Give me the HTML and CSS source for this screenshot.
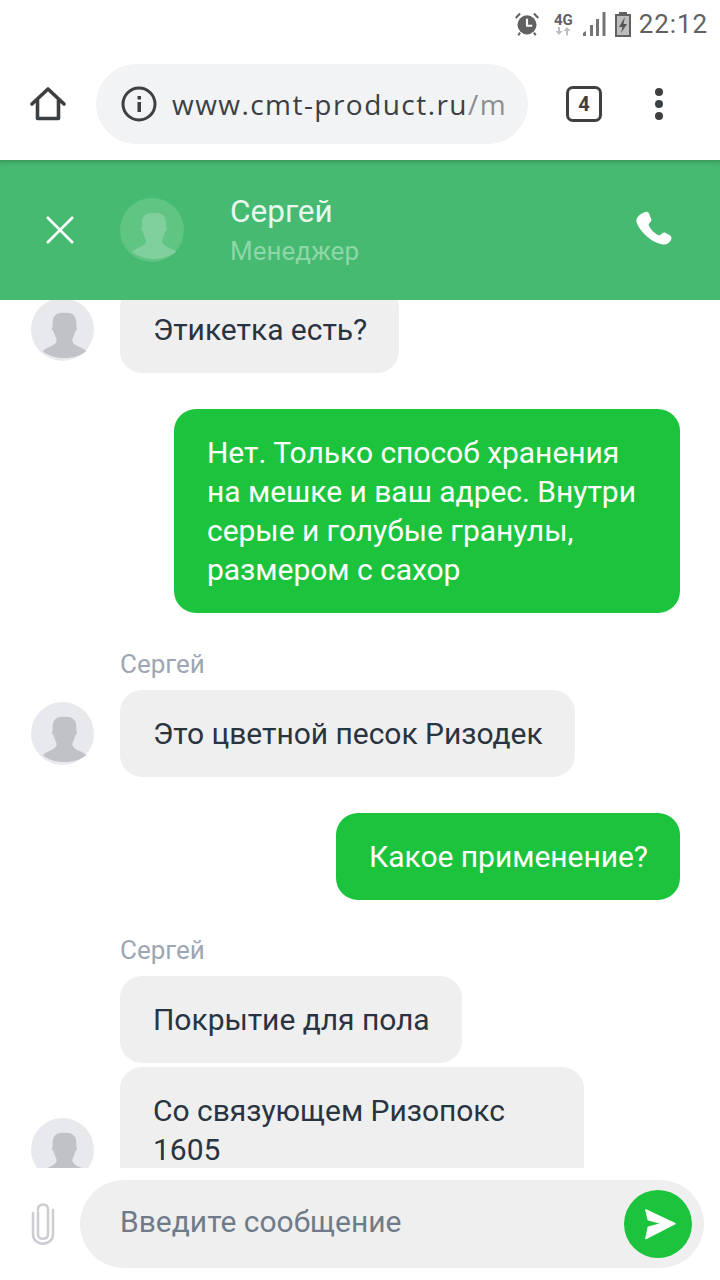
FILE: index.html
```html
<!DOCTYPE html>
<html lang="ru">
<head>
  <meta charset="UTF-8" />
  <meta name="viewport" content="width=device-width, initial-scale=1.0"/>
  <title>Чат</title>
  <link rel="stylesheet" href="styles.css">
</head>
<body>

<div class="status-bar">
  <svg class="st-alarm" width="26" height="26" viewBox="0 0 30 28">
    <circle cx="15" cy="15" r="11" fill="#616161"/>
    <path d="M15 8v8h6" fill="none" stroke="#fff" stroke-width="2.400"/>
    <path d="M2 7l5-5M28 7l-5-5M7 24l-2 3M23 24l2 3" stroke="#616161" stroke-width="2.400" fill="none"/>
  </svg>
  <div class="st-net">
    <span class="st-4g">4G</span>
    <svg width="16" height="9" viewBox="0 0 16 9">
      <path d="M4 8L0.500 4H3V0h2v4h2.500z" fill="#bdbdbd"/>
      <path d="M12 0l3.500 4H13v4.500h-2V4H8.500z" fill="#bdbdbd"/>
    </svg>
  </div>
  <svg class="st-signal" width="24" height="24" viewBox="0 0 24 24">
    <path d="M1 24v-3l3-2v5zM8 24V13h3v11zM14 24V7h3v17zM20.500 24V0h3v24z" fill="#757575"/>
  </svg>
  <svg class="st-batt" width="16" height="25" viewBox="0 0 16 25">
    <rect x="4" y="0" width="8" height="3" fill="#616161"/>
    <rect x="1" y="3" width="14" height="21" fill="#bdbdbd" stroke="#616161" stroke-width="2"/>
    <path d="M10 5L4 15h3.500L6 21l6-9H8.500z" fill="#555"/>
  </svg>
  <span class="st-time">22:12</span>
</div>

<div class="browser-bar">
  <svg class="home-icon" width="38" height="38" viewBox="0 0 38 38">
    <path d="M3 19L19 4l16 15M8.500 15v18.500h21V15" fill="none" stroke="#3c4043" stroke-width="3.600" stroke-linejoin="round" stroke-linecap="round"/>
  </svg>
  <div class="url-box">
    <svg class="info-icon" width="36" height="36" viewBox="0 0 36 36">
      <circle cx="18" cy="18" r="16" fill="none" stroke="#3c4043" stroke-width="3"/>
      <rect x="16.500" y="16" width="3.500" height="10" fill="#3c4043"/>
      <rect x="16.500" y="10" width="3.500" height="3.500" fill="#3c4043"/>
    </svg>
    <div class="url-text">www.cmt-product.ru<span class="url-path">/m</span></div>
  </div>
  <div class="tabs-count">4</div>
  <div class="menu-dots"><i></i><i></i><i></i></div>
</div>

<div class="chat-head">
  <svg class="close-icon" width="30" height="30" viewBox="0 0 30 30">
    <path d="M2 2l26 26M28 2L2 28" stroke="#fff" stroke-width="2.600" fill="none"/>
  </svg>
  <svg class="avatar avatar-head" viewBox="0 0 64 64">
    <circle cx="32" cy="32" r="32" fill="#60c583"/>
    <path d="M32 15c-7 0-10 4-10 10v4c-1 1-1 3 0 4 1 0 1 2 2 4 1 3 2 4 2 6 0 3-3 5-8 7-3 1-5 3-6 4 5 4 13 7 22 7s17-3 22-7c-1-1-3-3-6-4-5-2-8-4-8-7 0-2 1-3 2-6 1-2 1-4 2-4 1-1 1-3 0-4v-4c0-6-3-10-10-10z" fill="#7fd09c"/>
  </svg>
  <div class="head-info">
    <div class="head-name">Сергей</div>
    <div class="head-role">Менеджер</div>
  </div>
  <svg class="phone-icon" width="38" height="38" viewBox="0 0 38 38">
    <path d="M9 1.500c2-1 4-1 5 1l2 5c1 2 0 3-1.500 4.500-1 1-1 2-.5 3 2 4 5 7 9 9 1 .5 2 .5 3-.5 1.500-1.500 2.500-2.500 4.500-1.500l4 2c2 1 2.500 3 1.500 5-1.500 3-4.500 5-8 4.500C15 31.500 4 19 1.500 11 .500 7 5 3 9 1.500z" fill="#fff"/>
  </svg>
</div>

<div class="chat">
  <div class="msg-row first">
    <svg class="avatar" viewBox="0 0 64 64"><use href="#person"/></svg>
    <div class="bubble">Этикетка есть?</div>
  </div>

  <div class="own-row gap-a">
    <div class="bubble own wide">Нет. Только способ хранения на мешке и ваш адрес. Внутри серые и голубые гранулы, размером с сахор</div>
  </div>

  <div class="sender">Сергей</div>
  <div class="msg-row">
    <svg class="avatar" viewBox="0 0 64 64"><use href="#person"/></svg>
    <div class="bubble">Это цветной песок Ризодек</div>
  </div>

  <div class="own-row gap-b">
    <div class="bubble own">Какое применение?</div>
  </div>

  <div class="sender second">Сергей</div>
  <div class="msg-row plain">
    <div class="bubble">Покрытие для пола</div>
  </div>
  <div class="msg-row last">
    <svg class="avatar" viewBox="0 0 64 64"><use href="#person"/></svg>
    <div class="bubble narrow">Со связующем Ризопокс 1605</div>
  </div>
</div>

<div class="input-bar">
  <svg class="clip-icon" width="26" height="42" viewBox="0 0 26 42">
    <path d="M8 9v23c0 5 10 5 10 0V6.500C18 3 16 1.500 13 1.500S8 3 8 6.500M3 10v21c0 13 20 13 20 0V7" fill="none" stroke="#ccced3" stroke-width="2.600" stroke-linecap="round"/>
  </svg>
  <div class="input-box">
    <span class="placeholder">Введите сообщение</span>
    <div class="send-btn">
      <svg class="send-icon" width="32" height="32" viewBox="0 0 34 32">
        <path d="M2 1l31 14.500L2 31.500l2.500-12 15-4-15-4z" fill="#fff" stroke="#fff" stroke-width="1.500" stroke-linejoin="round"/>
      </svg>
    </div>
  </div>
</div>

<svg width="0" height="0" class="defs">
  <defs>
    <g id="person">
      <circle cx="32" cy="32" r="32" fill="#e8e9ec"/>
      <path d="M32 15c-7 0-10 4-10 10v4c-1 1-1 3 0 4 1 0 1 2 2 4 1 3 2 4 2 6 0 3-3 5-8 7-3 1-5 3-6 4 5 4 13 7 22 7s17-3 22-7c-1-1-3-3-6-4-5-2-8-4-8-7 0-2 1-3 2-6 1-2 1-4 2-4 1-1 1-3 0-4v-4c0-6-3-10-10-10z" fill="#c1c2c8"/>
    </g>
  </defs>
</svg>

</body>
</html>
```

FILE: styles.css
```css
html, body {
  margin: 0;
  padding: 0;
}
body {
  width: 720px;
  height: 1280px;
  overflow: hidden;
  background: #fff;
  font-family: Roboto, "Noto Sans", sans-serif;
  display: flex;
  flex-direction: column;
}

.status-bar {
  height: 48px;
  box-sizing: border-box;
  display: flex;
  align-items: center;
  justify-content: flex-end;
  padding: 0 12px 0 0;
  color: #616161;
}
.st-alarm {
  margin-right: 14px;
}
.st-net {
  display: flex;
  flex-direction: column;
  align-items: center;
  margin-right: 9px;
}
.st-4g {
  font-size: 15px;
  font-weight: 700;
  line-height: 14px;
}
.st-signal {
  margin-right: 9px;
}
.st-batt {
  margin-right: 8px;
}
.st-time {
  font-size: 26px;
  letter-spacing: 0.9px;
}

.browser-bar {
  height: 112px;
  box-sizing: border-box;
  display: flex;
  align-items: center;
  padding: 0 0 0 29px;
}
.url-box {
  margin-left: 29px;
  width: 432px;
  height: 80px;
  box-sizing: border-box;
  background: #f1f3f4;
  border-radius: 40px;
  display: flex;
  align-items: center;
  padding: 0 20px 0 25px;
  overflow: hidden;
}
.info-icon {
  flex-shrink: 0;
}
.url-text {
  margin-left: 15px;
  font-family: "Open Sans", sans-serif;
  font-size: 28px;
  letter-spacing: 1.45px;
  color: #3c4043;
  white-space: nowrap;
  overflow: hidden;
}
.url-path {
  color: #8e8e8e;
}
.tabs-count {
  margin-left: 38px;
  width: 36px;
  height: 36px;
  box-sizing: border-box;
  border: 3.5px solid #3c4043;
  border-radius: 7px;
  font-size: 20px;
  font-weight: 700;
  color: #3c4043;
  display: flex;
  align-items: center;
  justify-content: center;
}
.menu-dots {
  margin-left: 53px;
  display: flex;
  flex-direction: column;
  gap: 4px;
}
.menu-dots i {
  display: block;
  width: 8px;
  height: 8px;
  border-radius: 50%;
  background: #3c4043;
}

.chat-head {
  height: 140px;
  box-sizing: border-box;
  background: #46ba70;
  box-shadow: inset 0 5px 4px -3px rgba(0,0,0,0.2);
  display: flex;
  align-items: center;
  padding: 0 47px 0 45px;
  color: #fff;
  flex-shrink: 0;
}
.avatar {
  width: 64px;
  height: 64px;
  flex-shrink: 0;
}
.avatar-head {
  margin-left: 45px;
}
.head-info {
  margin-left: 46px;
  padding-top: 2px;
  flex: 1;
}
.head-name {
  font-size: 31.500px;
  line-height: 40px;
  color: #e8f7ed;
}
.head-role {
  font-size: 26px;
  line-height: 38px;
  color: #8dd6a7;
}

.chat {
  flex: 1;
  overflow: hidden;
  display: flex;
  flex-direction: column;
  padding: 0 40px 0 31px;
  min-height: 0;
}
.msg-row {
  display: flex;
  align-items: flex-end;
  flex-shrink: 0;
}
.msg-row .avatar {
  width: 63px;
  height: 63px;
  margin-bottom: 12px;
  margin-right: 26px;
}
.msg-row.first {
  margin-top: -14px;
}
.msg-row.plain {
  padding-left: 89px;
}
.msg-row.last {
  margin-top: 4px;
}
.bubble {
  background: #efeff0;
  color: #2a3440;
  font-size: 30px;
  line-height: 39px;
  padding: 24px 32px 24px 33px;
  border-radius: 22px;
  letter-spacing: -0.03px;
}
.bubble.narrow {
  width: 399px;
}
.bubble.own {
  background: #1bc43c;
  color: #fff;
}
.bubble.wide {
  width: 441px;
}
.own-row {
  display: flex;
  justify-content: flex-end;
  flex-shrink: 0;
}
.gap-a {
  margin-top: 36px;
}
.gap-b {
  margin-top: 36px;
}
.sender {
  margin: 37px 0 12px 89px;
  font-size: 26px;
  line-height: 28px;
  color: #9da7b3;
  flex-shrink: 0;
}
.sender.second {
  margin-top: 36px;
}

.input-bar {
  height: 112px;
  box-sizing: border-box;
  display: flex;
  align-items: center;
  padding: 0 16px 0 30px;
  flex-shrink: 0;
}
.clip-icon {
  margin-right: 24px;
}
.input-box {
  flex: 1;
  height: 88px;
  background: #efeff0;
  border-radius: 44px;
  display: flex;
  align-items: center;
  justify-content: space-between;
  padding: 0 12px 0 40px;
}
.placeholder {
  font-size: 30px;
  line-height: 36px;
  margin-top: -5px;
  color: #6f7b88;
}
.send-btn {
  width: 68px;
  height: 68px;
  border-radius: 50%;
  background: #1bc43c;
  display: flex;
  align-items: center;
  justify-content: center;
}
.send-icon {
  margin-left: 3px;
}
.defs {
  position: absolute;
}
```
